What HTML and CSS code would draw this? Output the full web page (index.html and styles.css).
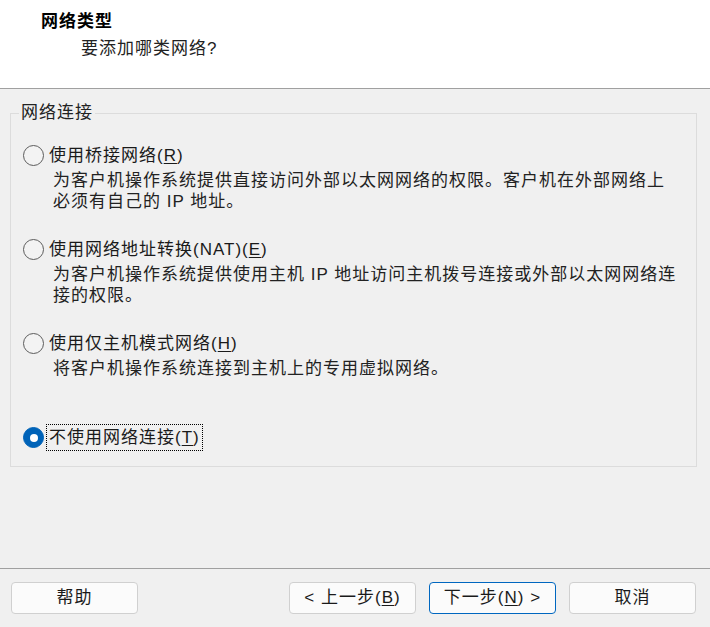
FILE: index.html
```html
<!DOCTYPE html>
<html lang="zh-CN">
<head>
<meta charset="utf-8">
<title>网络类型</title>
<link rel="stylesheet" href="styles.css">
</head>
<body>
<div class="dialog">
  <header class="header">
    <div class="title">网络类型</div>
    <div class="subtitle">要添加哪类网络?</div>
  </header>
  <main class="main">
    <fieldset class="group">
      <legend class="legend">网络连接</legend>
      <div class="option">
        <div class="opt-row"><span class="radio"></span><span class="label">使用桥接网络(<u>R</u>)</span></div>
        <div class="desc">为客户机操作系统提供直接访问外部以太网网络的权限。客户机在外部网络上<br>必须有自己的 IP 地址。</div>
      </div>
      <div class="option">
        <div class="opt-row"><span class="radio"></span><span class="label">使用网络地址转换(NAT)(<u>E</u>)</span></div>
        <div class="desc">为客户机操作系统提供使用主机 IP 地址访问主机拨号连接或外部以太网网络连<br>接的权限。</div>
      </div>
      <div class="option option-last-gap">
        <div class="opt-row"><span class="radio"></span><span class="label">使用仅主机模式网络(<u>H</u>)</span></div>
        <div class="desc">将客户机操作系统连接到主机上的专用虚拟网络。</div>
      </div>
      <div class="option option-final">
        <div class="opt-row"><span class="radio checked"></span><span class="label focused">不使用网络连接(<u>T</u>)</span></div>
      </div>
    </fieldset>
  </main>
  <footer class="footer">
    <button class="btn">帮助</button>
    <div class="btn-group">
      <button class="btn">&lt; 上一步(<u>B</u>)</button>
      <button class="btn primary">下一步(<u>N</u>) &gt;</button>
      <button class="btn">取消</button>
    </div>
  </footer>
</div>
</body>
</html>
```
FILE: styles.css
```css
* { box-sizing: border-box; }
html, body { margin: 0; padding: 0; }
body {
  background: #f0f0f0;
  font-family: "Liberation Sans", "Noto Sans CJK SC", sans-serif;
  font-size: 17px;
  letter-spacing: 1px;
  color: #1a1a1a;
}
.dialog {
  width: 710px;
  height: 627px;
  display: flex;
  flex-direction: column;
}
.header {
  height: 89px;
  background: #ffffff;
  border-bottom: 1px solid #a0a0a0;
  padding-top: 11px;
}
.title {
  padding-left: 41px;
  font-weight: bold;
  line-height: 22px;
  color: #000;
}
.subtitle {
  padding-left: 81px;
  margin-top: 5px;
  line-height: 22px;
  color: #222;
}
.main {
  flex: 1;
  padding: 13px 13px 0 10px;
}
.group {
  margin: 0;
  border: 1px solid #dcdcdc;
  padding: 21px 12px 18px 12px;
  min-width: 0;
}
.legend {
  margin-left: -4px;
  padding: 0 2px;
  line-height: 22px;
  color: #222;
}
.option { margin-bottom: 27px; }
.option-last-gap { margin-bottom: 48px; }
.option-final { margin-bottom: 0; }
.opt-row {
  display: flex;
  align-items: center;
  height: 21px;
  gap: 6px;
}
.radio {
  width: 21px;
  height: 21px;
  border-radius: 50%;
  border: 1px solid #5c5c5c;
  background: #f3f3f3;
  flex: none;
  display: flex;
  align-items: center;
  justify-content: center;
  margin-right: -1px;
}
.radio.checked {
  background: #0063b8;
  border-color: #0063b8;
}
.radio.checked::after {
  content: "";
  width: 8px;
  height: 8px;
  border-radius: 50%;
  background: #ffffff;
}
.label {
  line-height: 21px;
  white-space: nowrap;
}
.label u { text-underline-offset: 2px; }
.focused {
  outline: 1px dotted #000;
  outline-offset: 2px;
}
.desc {
  margin-top: 4px;
  padding-left: 30px;
  line-height: 21px;
  white-space: nowrap;
  color: #222;
}
.footer {
  height: 59px;
  border-top: 1px solid #a0a0a0;
  padding: 13px 14px 0 11px;
  display: flex;
  justify-content: space-between;
  align-items: flex-start;
}
.btn-group {
  display: flex;
  gap: 13px;
}
.btn {
  width: 127px;
  height: 32px;
  background: #fbfbfb;
  border: 1px solid #d0d0d0;
  border-radius: 4px;
  font-family: inherit;
  font-size: 17px;
  letter-spacing: 1px;
  color: #1a1a1a;
  padding: 0;
  line-height: 30px;
}
.btn u { text-underline-offset: 2px; }
.btn.primary { border-color: #0067c0; }
```
